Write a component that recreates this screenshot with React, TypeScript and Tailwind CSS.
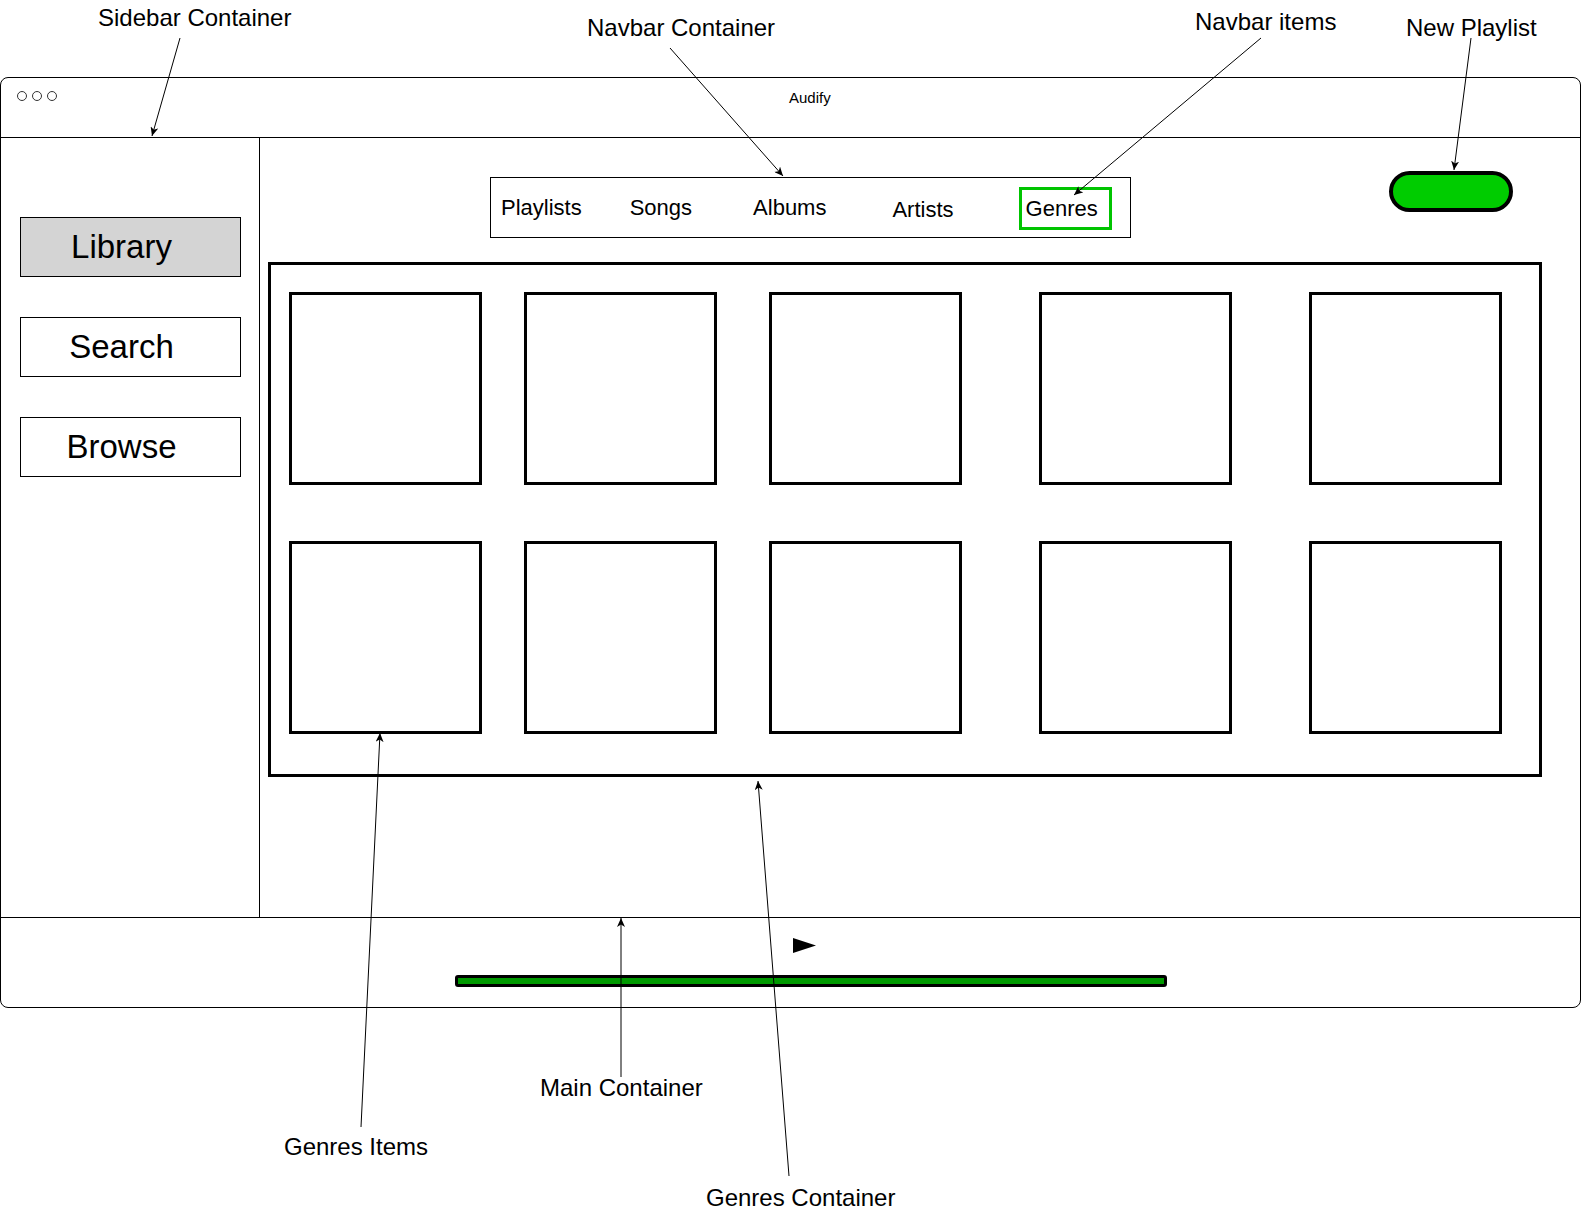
import React from "react"

const navItems = [
  { label: "Playlists", ml: "ml-[10px]" },
  { label: "Songs", ml: "ml-[48px]" },
  { label: "Albums", ml: "ml-[61px]" },
  { label: "Artists", ml: "ml-[66px] mt-[3px]" },
]

const colGaps = ["ml-0", "ml-[42px]", "ml-[52px]", "ml-[77px]", "ml-[77px]"]

const arrows: [number, number, number, number][] = [
  [180, 38, 152, 136],
  [670, 48, 783, 176],
  [1261, 38, 1074, 195],
  [1471, 38, 1454, 170],
  [621, 1077, 621, 918],
  [361, 1127, 380, 733],
  [789, 1176, 758, 781],
]

const labels = [
  { text: "Sidebar Container", cls: "left-[98px] top-[6px]" },
  { text: "Navbar Container", cls: "left-[587px] top-[16px]" },
  { text: "Navbar items", cls: "left-[1195px] top-[10px]" },
  { text: "New Playlist", cls: "left-[1406px] top-[16px]" },
  { text: "Main Container", cls: "left-[540px] top-[1076px]" },
  { text: "Genres Items", cls: "left-[284px] top-[1135px]" },
  { text: "Genres Container", cls: "left-[706px] top-[1186px]" },
]

function SideButton({ label, active }: { label: string; active?: boolean }) {
  return (
    <div
      className={`w-[221px] h-[60px] border border-black flex items-center justify-center pr-[18px] text-[33px] text-black ${
        active ? "bg-[#d4d4d4]" : "bg-white"
      }`}
    >
      {label}
    </div>
  )
}

function GenreRow() {
  return (
    <div className="flex">
      {colGaps.map((g, i) => (
        <div key={i} className={`${g} w-[193px] h-[193px] border-[3px] border-black bg-white`} />
      ))}
    </div>
  )
}

export default function App() {
  return (
    <div className="relative w-[1585px] h-[1211px] bg-white overflow-hidden font-['Liberation_Sans',Arial,Helvetica,sans-serif] text-black">
      <div className="pt-[77px]">
        {/* window */}
        <div className="w-[1581px] h-[931px] border border-black rounded-lg flex flex-col overflow-hidden">
          {/* title bar */}
          <div className="h-[60px] border-b border-black shrink-0 flex items-start pt-[12px] pl-[16px]">
            <div className="h-[12px] flex items-center gap-[5px]">
              <span className="w-[10px] h-[10px] rounded-full border border-[#333]" />
              <span className="w-[10px] h-[10px] rounded-full border border-[#333]" />
              <span className="w-[10px] h-[10px] rounded-full border border-[#333]" />
            </div>
            <div className="h-[12px] mt-[2px] flex items-center ml-[732px] text-[15px]">Audify</div>
          </div>

          {/* body */}
          <div className="flex flex-1">
            {/* sidebar */}
            <div className="w-[259px] border-r border-black shrink-0 pt-[79px] pl-[19px] flex flex-col gap-[40px]">
              <SideButton label="Library" active />
              <SideButton label="Search" />
              <SideButton label="Browse" />
            </div>

            {/* main */}
            <div className="flex-1 pt-[33px]">
              <div className="flex items-start">
                <div className="ml-[230px] mt-[6px] w-[641px] h-[61px] border border-black flex items-center text-[22px]">
                  {navItems.map((n) => (
                    <span key={n.label} className={`${n.ml} whitespace-nowrap`}>
                      {n.label}
                    </span>
                  ))}
                  <span className="ml-[65px] mt-[1px] h-[43px] w-[93px] border-[3px] border-[#00c400] pl-[4px] flex items-center whitespace-nowrap">
                    Genres
                  </span>
                </div>
                <button className="ml-[258px] w-[124px] h-[41px] rounded-full border-4 border-black bg-[#00cc00]" />
              </div>

              <div className="ml-[8px] mt-[24px] w-[1274px] h-[515px] border-[3px] border-black pt-[27px] pl-[18px] flex flex-col gap-[56px]">
                <GenreRow />
                <GenreRow />
              </div>
            </div>
          </div>

          {/* player bar */}
          <div className="h-[90px] border-t border-black shrink-0 flex flex-col">
            <svg className="ml-[792px] mt-[20px] block" width="23" height="15" viewBox="0 0 23 15">
              <polygon points="0,0 23,7.5 0,15" fill="black" />
            </svg>
            <div className="ml-[454px] mt-[22px] w-[712px] h-[12px] rounded-[3px] border-[3px] border-black bg-[#009900]" />
          </div>
        </div>
      </div>

      {/* annotations */}
      {labels.map((l) => (
        <div key={l.text} className={`absolute ${l.cls} text-[24px] leading-[24px] whitespace-nowrap`}>
          {l.text}
        </div>
      ))}
      <svg className="absolute left-0 top-0 pointer-events-none" width="1585" height="1211">
        <defs>
          <marker
            id="arrowhead"
            markerUnits="userSpaceOnUse"
            markerWidth="10"
            markerHeight="8"
            refX="9"
            refY="4"
            orient="auto"
          >
            <path d="M0,0 L9,4 L0,8 L2.5,4 Z" fill="black" />
          </marker>
        </defs>
        {arrows.map(([x1, y1, x2, y2], i) => (
          <line key={i} x1={x1} y1={y1} x2={x2} y2={y2} stroke="black" strokeWidth="1" markerEnd="url(#arrowhead)" />
        ))}
      </svg>
    </div>
  )
}
